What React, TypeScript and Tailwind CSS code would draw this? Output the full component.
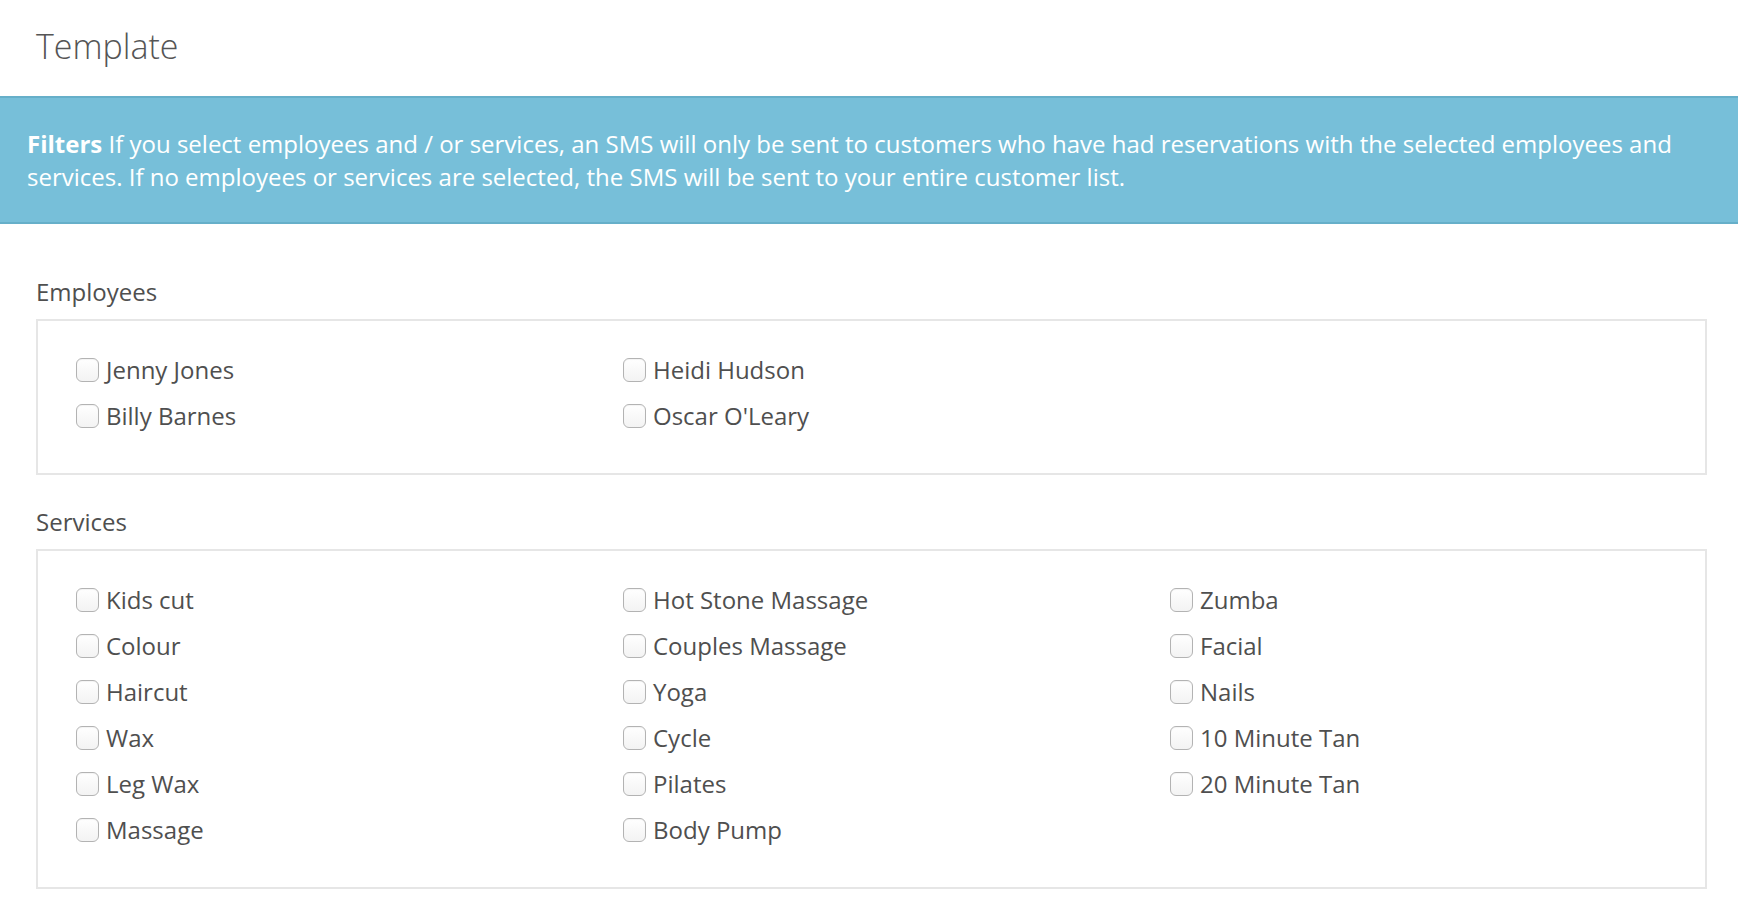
const employees = ["Jenny Jones", "Heidi Hudson", "", "Billy Barnes", "Oscar O'Leary", ""];

const services = [
  "Kids cut", "Hot Stone Massage", "Zumba",
  "Colour", "Couples Massage", "Facial",
  "Haircut", "Yoga", "Nails",
  "Wax", "Cycle", "10 Minute Tan",
  "Leg Wax", "Pilates", "20 Minute Tan",
  "Massage", "Body Pump", "",
];

function CheckItem({ label }: { label: string }) {
  if (!label) return <div className="h-[46px]" />;
  return (
    <label className="flex h-[46px] items-center gap-[7px] text-[24px] leading-[46px] text-[#4f4f4f]">
      <input
        type="checkbox"
        className="h-[24px] w-[23px] shrink-0 appearance-none rounded-[6px] border border-[#b3b3b3] bg-gradient-to-b from-white to-[#f3f3f3] shadow-[inset_0_1px_1px_rgba(0,0,0,0.05)]"
      />
      <span>{label}</span>
    </label>
  );
}

function Group({ title, items, className }: { title: string; items: string[]; className?: string }) {
  return (
    <div className={className}>
      <h3 className="text-[24px] leading-[36px] text-[#4f4f4f]">{title}</h3>
      <div className="mt-[9px] border-2 border-[#e6e6e6] pl-[38px] pt-[26px] pb-[34px]">
        <div className="grid grid-cols-[repeat(3,547px)]">
          {items.map((item, i) => (
            <CheckItem key={i} label={item} />
          ))}
        </div>
      </div>
    </div>
  );
}

export default function App() {
  return (
    <div className="min-h-screen bg-white font-['Open_Sans',sans-serif]">
      {/* Header */}
      <div className="h-[96px] px-[36px] pt-[29px]">
        <h1 className="text-[34px] font-light leading-[34px] text-[#555]">Template</h1>
      </div>

      {/* Filters banner */}
      <div className="border-y-2 border-[#66afc9] bg-[#77bfd9] px-[27px] pt-[29px] pb-[29px] text-[24px] leading-[33px] text-white">
        <strong className="font-bold">Filters</strong> If you select employees and / or services, an SMS will only be sent to
        customers who have had reservations with the selected employees and services. If no employees or services are
        selected, the SMS will be sent to your entire customer list.
      </div>

      <div className="pl-[36px] pr-[31px]">
        <Group title="Employees" items={employees} className="mt-[50px]" />
        <Group title="Services" items={services} className="mt-[29px]" />
      </div>
    </div>
  );
}
